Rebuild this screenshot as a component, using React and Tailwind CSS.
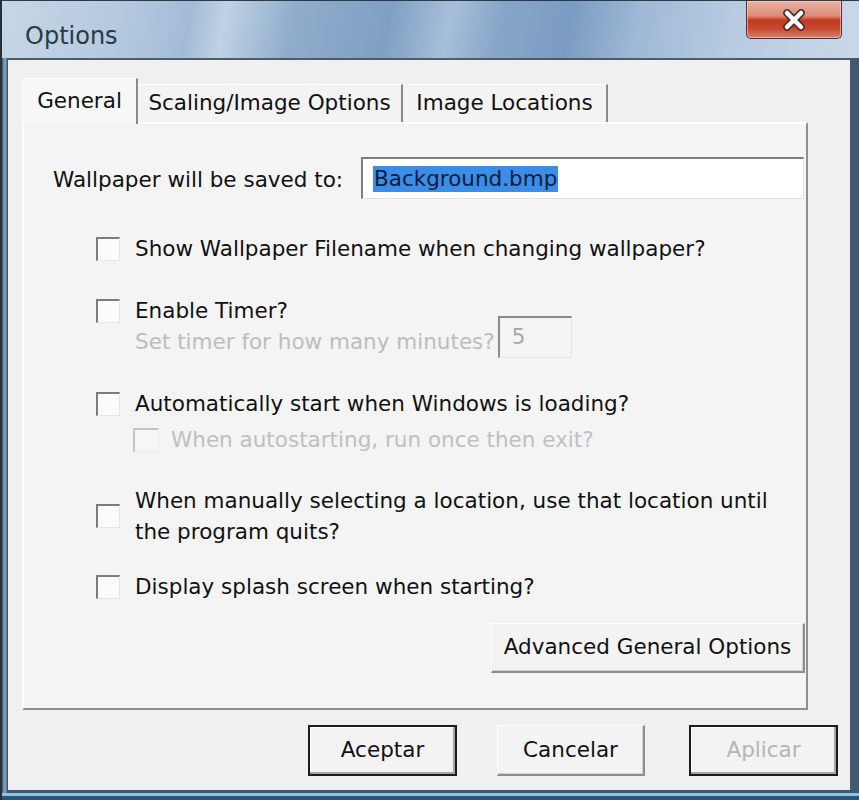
import React from "react";

const font = { fontFamily: '"DejaVu Sans", Verdana, sans-serif' };

function Box({ disabled }) {
  return (
    <span
      className={
        disabled
          ? "block shrink-0 w-[26px] h-[24px] bg-[#f6f6f6] border-t-2 border-l-2 border-r border-b border-t-[#c4c4c4] border-l-[#c4c4c4] border-r-[#ececec] border-b-[#ececec]"
          : "block shrink-0 w-[24px] h-[24px] bg-[#fbfbfb] border-t-2 border-l-2 border-r border-b border-t-[#7c7c7c] border-l-[#7c7c7c] border-r-[#e6e6e6] border-b-[#e6e6e6]"
      }
    />
  );
}

function TitleBar() {
  return (
    <div className="h-[58px] flex items-start justify-between border-t border-t-[#2c3a48] bg-[linear-gradient(100deg,#c6d6e7_0%,#b3c8de_15%,#a2bbd6_22%,#c0d2e4_26%,#90accb_34%,#7f9fc4_45%,#a7bfd9_52%,#86a5c8_58%,#7b9cc2_66%,#9fb9d6_74%,#b9cde2_86%,#c8d8e8_100%)]">
      <div className="mt-[19px] ml-[23px] text-[24px] leading-[32px] text-[#2c3844]" style={font}>
        Options
      </div>
      <div className="mr-[17px] w-[96px] h-[38px] rounded-b-[5px] border border-t-0 border-[#5e2a22] bg-[linear-gradient(180deg,#eab2a4_0%,#dc8c79_40%,#c3391f_52%,#c84a30_75%,#d9806b_100%)] shadow-[inset_0_0_0_1px_rgba(255,220,210,0.55)] flex items-center justify-center">
        <svg width="28" height="22" viewBox="0 0 28 22">
          <path d="M7 4 L21 18 M21 4 L7 18" stroke="#4a2a26" strokeWidth="7.5" strokeLinecap="round" />
          <path d="M7 4 L21 18 M21 4 L7 18" stroke="#ffffff" strokeWidth="4.5" strokeLinecap="round" />
        </svg>
      </div>
    </div>
  );
}

function Tab({ children, selected, w }) {
  if (selected) {
    return (
      <div
        className={`${w} h-[46px] -mb-[2px] relative z-10 bg-[#f7f7f7] rounded-tl-[4px] border-t border-l border-t-[#ffffff] border-l-[#ffffff] border-r-2 border-r-[#8a8a8a] flex items-center justify-center text-[21.5px] text-[#111]`}
        style={font}
      >
        {children}
      </div>
    );
  }
  return (
    <div
      className={`${w} h-[38px] bg-[#f3f3f3] border-t border-t-[#ffffff] border-r-2 border-r-[#8a8a8a] flex items-center justify-center text-[21.5px] text-[#111]`}
      style={font}
    >
      {children}
    </div>
  );
}

function Button({ children, def, disabled, w }) {
  const base = `${w} flex items-center justify-center text-[21.5px] bg-[#f3f3f3]`;
  const border = def
    ? "border-2 border-[#1c1c1c] shadow-[inset_-2px_-2px_0_#a6a6a6,inset_1px_1px_0_#ffffff]"
    : "border-t border-l border-t-[#ffffff] border-l-[#ffffff] border-r-2 border-b-2 border-r-[#8e8e8e] border-b-[#8e8e8e] shadow-[inset_-1px_-1px_0_#d2d2d2]";
  return (
    <div
      className={`${base} ${border} ${disabled ? "text-[#b5b5b5]" : "text-[#111]"}`}
      style={font}
    >
      {children}
    </div>
  );
}

export default function App() {
  return (
    <div className="w-[859px] h-[800px] overflow-hidden flex flex-col bg-[#5f86ae] border-l-2 border-l-[#26313c]">
      <TitleBar />
      <div className="flex-1 flex bg-[linear-gradient(90deg,#3d4f61_0px,#7d9cbb_2px,#7d9cbb_4px,#44586c_5px)] pl-[6px] pr-[9px] pb-[10px] shadow-[inset_0_-4px_0_#2b5478,inset_0_-7px_0_#8cc4e4]">
        <div className="flex-1 flex flex-col bg-[#f0f0f0] border-t-2 border-t-[#4d5c6a] pt-[18px] pl-[14px] pr-[12px] text-[21.5px] text-[#111]" style={font}>
          {/* Tabs */}
          <div className="h-[44px] flex items-end">
            <Tab selected w="w-[116px]">General</Tab>
            <Tab w="w-[265px]">Scaling/Image Options</Tab>
            <Tab w="w-[205px]">Image Locations</Tab>
          </div>

          {/* Panel */}
          <div className="w-[786px] h-[588px] bg-[#f4f4f4] border-t-2 border-l-2 border-t-[#ffffff] border-l-[#ffffff] border-r-2 border-b-2 border-r-[#8f8f8f] border-b-[#8f8f8f] flex flex-col">
            <div className="mt-[33px] h-[42px] flex items-center pl-[29px] pr-[2px]">
              <span className="leading-[30px] mt-[4px]">Wallpaper will be saved to:</span>
              <div className="ml-auto w-[443px] h-[42px] bg-white border-t-2 border-l-2 border-t-[#7f7f7f] border-l-[#7f7f7f] border-r border-b border-r-[#e2e2e2] border-b-[#e2e2e2] flex items-center pl-[10px]">
                <span className="bg-[#3a8ee8] text-[#0c1c3c] leading-[26px] px-[1px]">Background.bmp</span>
              </div>
            </div>

            <div className="mt-[35px] h-[30px] flex items-center pl-[72px]">
              <Box />
              <span className="ml-[15px] leading-[30px]">Show Wallpaper Filename when changing wallpaper?</span>
            </div>

            <div className="mt-[32px] h-[30px] flex items-center pl-[72px]">
              <Box />
              <span className="ml-[15px] leading-[30px]">Enable Timer?</span>
            </div>

            <div className="-mt-[10px] h-[42px] flex items-start pl-[111px]">
              <span className="mt-[11px] leading-[30px] text-[#bdbdbd]">Set timer for how many minutes?</span>
              <div className="ml-[3px] w-[74px] h-[42px] bg-[#f4f4f4] border-t-2 border-l-2 border-t-[#8a8a8a] border-l-[#8a8a8a] border-r border-b border-r-[#e4e4e4] border-b-[#e4e4e4] flex items-center pl-[12px] text-[#a8a8a8]">
                5
              </div>
            </div>

            <div className="mt-[31px] h-[30px] flex items-center pl-[72px]">
              <Box />
              <span className="ml-[15px] leading-[30px]">Automatically start when Windows is loading?</span>
            </div>

            <div className="mt-[6px] h-[30px] flex items-center pl-[109px]">
              <Box disabled />
              <span className="ml-[12px] leading-[30px] text-[#c0c0c0]">When autostarting, run once then exit?</span>
            </div>

            <div className="mt-[30px] flex items-center pl-[72px]">
              <Box />
              <span className="ml-[15px] leading-[31px]">
                When manually selecting a location, use that location until
                <br />
                the program quits?
              </span>
            </div>

            <div className="mt-[25px] h-[30px] flex items-center pl-[72px]">
              <Box />
              <span className="ml-[15px] leading-[30px]">Display splash screen when starting?</span>
            </div>

            <div className="mt-[21px] flex justify-end pr-[1px]">
              <div className="h-[50px] flex">
                <Button w="w-[314px]">Advanced General Options</Button>
              </div>
            </div>
          </div>

          {/* Bottom buttons */}
          <div className="mt-[15px] h-[51px] flex justify-end">
            <Button def w="w-[149px]">Aceptar</Button>
            <div className="w-[40px]" />
            <Button w="w-[148px]">Cancelar</Button>
            <div className="w-[44px]" />
            <Button def disabled w="w-[149px]">Aplicar</Button>
          </div>
        </div>
      </div>
    </div>
  );
}
